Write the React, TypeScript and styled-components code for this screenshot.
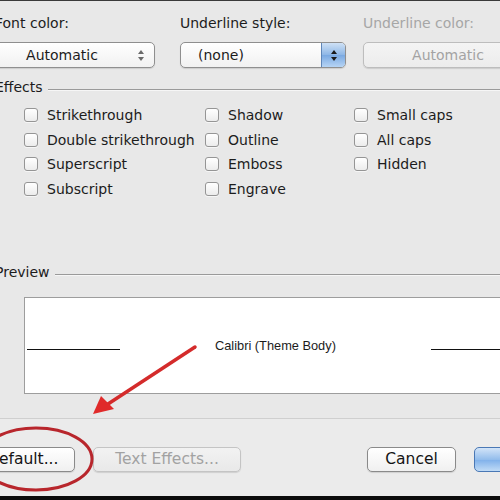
import React from "react";
import styled, { createGlobalStyle } from "styled-components";

const GlobalStyle = createGlobalStyle`
  html, body {
    margin: 0;
    padding: 0;
    background: #e8e8e8;
  }
  * {
    box-sizing: border-box;
  }
`;

const Frame = styled.div`
  position: relative;
  width: 500px;
  height: 500px;
  overflow: hidden;
  background: #e8e8e8;
  border-top: 1px solid #3a3a3a;
  border-bottom: 4px solid #0c0c0c;
  font-family: "DejaVu Sans", "Liberation Sans", sans-serif;
  font-size: 14px;
  color: #1c1c1c;
`;

const Dialog = styled.div`
  width: 540px;
  margin-left: -5px;
  padding-top: 14px;
`;

const TopRow = styled.div`
  display: grid;
  grid-template-columns: 185px 183px 1fr;
`;

const Field = styled.div`
  display: flex;
  flex-direction: column;
`;

const Label = styled.div<{ $disabled?: boolean }>`
  line-height: 16px;
  height: 16px;
  margin-bottom: 11px;
  color: ${(p) => (p.$disabled ? "#a6a6a6" : "#1c1c1c")};
`;

const Popup = styled.div<{ $width: number; $disabled?: boolean }>`
  position: relative;
  width: ${(p) => p.$width}px;
  height: 26px;
  border: 1px solid ${(p) => (p.$disabled ? "#bdbdbd" : "#8f8f8f")};
  border-radius: 5px;
  background: ${(p) =>
    p.$disabled
      ? "linear-gradient(#f4f4f4, #ececec)"
      : "linear-gradient(#ffffff, #f1f1f1)"};
  box-shadow: 0 1px 1px rgba(0, 0, 0, 0.12);
  display: flex;
  align-items: center;
  overflow: hidden;
  color: ${(p) => (p.$disabled ? "#a3a3a3" : "#1c1c1c")};
`;

const PopupText = styled.span<{ $center?: boolean }>`
  flex: 1;
  text-align: ${(p) => (p.$center ? "center" : "left")};
  padding-left: ${(p) => (p.$center ? "0" : "17px")};
  line-height: 24px;
`;

const PlainArrows = styled.span`
  width: 26px;
  height: 100%;
  display: flex;
  align-items: center;
  justify-content: center;
  color: #6a6a6a;
`;

const BlueArrows = styled.span`
  width: 24px;
  height: 100%;
  display: flex;
  align-items: center;
  justify-content: center;
  color: #1a1a1a;
  border-left: 1px solid #5f86b8;
  background: linear-gradient(#cfe1f5, #8db6e6 50%, #7aa9e2 51%, #b6d4f4);
`;

const GroupHeader = styled.div<{ $top: number }>`
  display: flex;
  align-items: center;
  margin-top: ${(p) => p.$top}px;
  height: 16px;
  line-height: 16px;
`;

const GroupRule = styled.div`
  flex: 1;
  height: 1px;
  margin: 4px 0 0 5px;
  background: #9a9a9a;
  box-shadow: 0 1px 0 #f6f6f6;
`;

const EffectsGrid = styled.div`
  display: grid;
  grid-template-columns: 181px 149px 1fr;
  grid-auto-flow: column;
  grid-template-rows: repeat(4, 24.5px);
  padding-left: 29px;
  margin-top: 8px;
`;

const CheckRow = styled.label`
  display: flex;
  align-items: center;
  gap: 9px;
  white-space: nowrap;
`;

const Box = styled.span`
  width: 14px;
  height: 14px;
  border: 1px solid #959595;
  border-radius: 3px;
  background: linear-gradient(#ffffff, #ececec);
  box-shadow: 0 1px 0 rgba(255, 255, 255, 0.6);
`;

const PreviewBox = styled.div`
  margin: 17px 0 0 29px;
  height: 97px;
  border: 1px solid #9d9d9d;
  background: #ffffff;
  display: flex;
  align-items: center;
  padding-left: 2px;
`;

const Rule = styled.div<{ $width: number }>`
  width: ${(p) => p.$width}px;
  height: 1px;
  background: #111;
  margin-top: 7px;
  flex: none;
`;

const SampleText = styled.span`
  font-family: "Liberation Sans", "Open Sans", sans-serif;
  font-size: 12.8px;
  margin: 0 95px 0 95px;
  white-space: nowrap;
`;

const Separator = styled.div`
  margin-top: 24px;
  height: 1px;
  background: #cfcfcf;
  box-shadow: 0 1px 0 #f7f7f7;
`;

const Footer = styled.div`
  display: flex;
  align-items: flex-start;
  padding-top: 28px;
  margin-left: -15px;
  background: #ebebeb;
  height: 80px;
`;

const Button = styled.div<{ $width: number; $gap?: number; $disabled?: boolean }>`
  width: ${(p) => p.$width}px;
  height: 25px;
  margin-left: ${(p) => p.$gap ?? 0}px;
  border: 1px solid ${(p) => (p.$disabled ? "#c4c4c4" : "#8a8a8a")};
  border-radius: 5px;
  background: ${(p) =>
    p.$disabled
      ? "linear-gradient(#f2f2f2, #e9e9e9)"
      : "linear-gradient(#ffffff, #f0f0f0)"};
  box-shadow: 0 1px 1px rgba(0, 0, 0, 0.12);
  color: ${(p) => (p.$disabled ? "#a2a2a2" : "#141414")};
  font-size: 15.5px;
  line-height: 23px;
  text-align: center;
  flex: none;
`;

const DefaultButton = styled.div`
  width: 95px;
  height: 25px;
  border: 1px solid #8a8a8a;
  border-radius: 5px;
  background: linear-gradient(#ffffff, #f0f0f0);
  box-shadow: 0 1px 1px rgba(0, 0, 0, 0.12);
  color: #141414;
  font-size: 15.5px;
  line-height: 23px;
  padding-left: 6px;
  white-space: nowrap;
  flex: none;
`;

const OkButton = styled.div`
  width: 90px;
  height: 25px;
  margin-left: 18px;
  border: 1px solid #4a78b5;
  border-radius: 5px;
  background: linear-gradient(#d2e4f8, #93bdec 50%, #7fb0ea 51%, #c0dbf6);
  flex: none;
`;

const Overlay = styled.svg`
  position: absolute;
  left: 0;
  top: 0;
  pointer-events: none;
`;

const Updown = () => (
  <svg width="8" height="13" viewBox="0 0 8 13">
    <path d="M4 1 L7 5 L1 5 Z" fill="currentColor" />
    <path d="M4 12 L7 8 L1 8 Z" fill="currentColor" />
  </svg>
);

const effects = [
  "Strikethrough",
  "Double strikethrough",
  "Superscript",
  "Subscript",
  "Shadow",
  "Outline",
  "Emboss",
  "Engrave",
  "Small caps",
  "All caps",
  "Hidden",
];

export default function App() {
  return (
    <>
      <GlobalStyle />
      <Frame>
        <Dialog>
          <TopRow>
            <Field>
              <Label>Font color:</Label>
              <Popup $width={160}>
                <PopupText $center>Automatic</PopupText>
                <PlainArrows>
                  <Updown />
                </PlainArrows>
              </Popup>
            </Field>
            <Field>
              <Label>Underline style:</Label>
              <Popup $width={166}>
                <PopupText>(none)</PopupText>
                <BlueArrows>
                  <Updown />
                </BlueArrows>
              </Popup>
            </Field>
            <Field>
              <Label $disabled>Underline color:</Label>
              <Popup $width={170} $disabled>
                <PopupText $center>Automatic</PopupText>
              </Popup>
            </Field>
          </TopRow>

          <GroupHeader $top={11}>
            Effects
            <GroupRule />
          </GroupHeader>
          <EffectsGrid>
            {effects.map((name) => (
              <CheckRow key={name}>
                <Box />
                {name}
              </CheckRow>
            ))}
          </EffectsGrid>

          <GroupHeader $top={63}>
            Preview
            <GroupRule />
          </GroupHeader>
          <PreviewBox>
            <Rule $width={93} />
            <SampleText>Calibri (Theme Body)</SampleText>
            <Rule $width={120} />
          </PreviewBox>

          <Separator />
          <Footer>
            <DefaultButton>Default...</DefaultButton>
            <Button $width={148} $gap={18} $disabled>
              Text Effects...
            </Button>
            <Button $width={89} $gap={126}>
              Cancel
            </Button>
            <OkButton />
          </Footer>
        </Dialog>

        <Overlay width="500" height="500" viewBox="0 0 500 500">
          <line
            x1="195"
            y1="346"
            x2="108"
            y2="403"
            stroke="#d42b2b"
            strokeWidth="3.5"
            strokeLinecap="round"
          />
          <path d="M93 413 L101 395 L114 408 Z" fill="#e02a2a" />
          <ellipse
            cx="36"
            cy="458"
            rx="56"
            ry="31"
            fill="none"
            stroke="#b8262c"
            strokeWidth="3"
          />
        </Overlay>
      </Frame>
    </>
  );
}
